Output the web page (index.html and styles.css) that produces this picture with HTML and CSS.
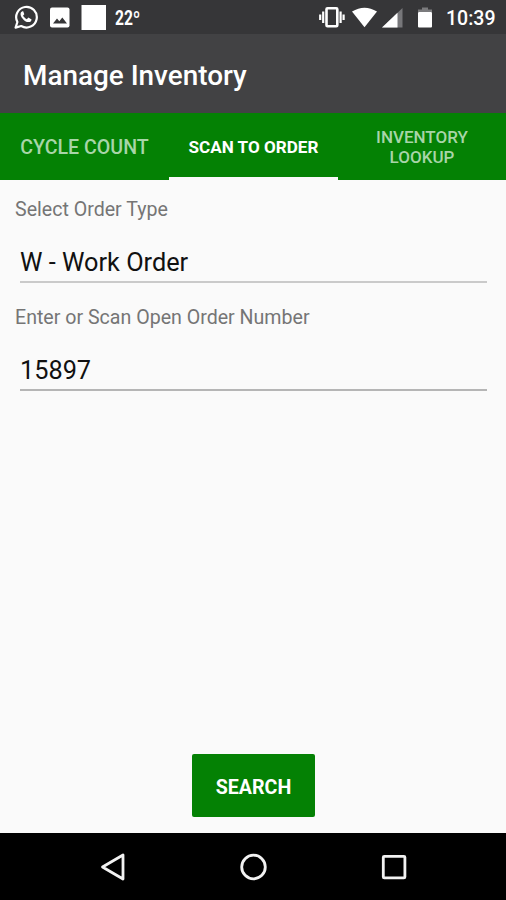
FILE: index.html
```html
<!DOCTYPE html>
<html lang="en">
<head>
    <meta charset="UTF-8">
    <meta name="viewport" content="width=device-width, initial-scale=1.0">
    <title>Manage Inventory</title>
    <link rel="stylesheet" href="styles.css">
</head>
<body>

<div class="screen">
    <div class="status-bar">
        <svg class="status-icons-left" width="92" height="34" viewBox="14 0 92 34">
            <path d="M15.6 27.6 L17.4 22 A10.3 10.3 0 1 1 21.2 26 Z" fill="none" stroke="#fff" stroke-width="2.2" stroke-linejoin="round"/>
            <path d="M22.4 11.2 C20 12 20 15.4 22.3 18.2 C25 21.8 28.6 23.2 31 21.2 L31.6 19.4 L28.4 17.6 L26.8 19.2 C25 18.4 23.8 17.2 23.1 15.6 L24.3 14.2 L23.2 11.2 Z" fill="#fff"/>
            <rect x="50" y="7.5" width="19.5" height="20" rx="2" fill="#fff"/>
            <path d="M53 23.5 L57 18.5 L59.3 21.3 L62.3 17.5 L67 23.5 Z" fill="#363638"/>
            <rect x="81.5" y="5" width="24.5" height="25" fill="#fff"/>
        </svg>
        <span class="temperature">22º</span>
        <svg class="status-icons-right" width="118" height="34" viewBox="317 0 118 34">
            <rect x="326.5" y="8.3" width="10.8" height="18" rx="1" fill="none" stroke="#fff" stroke-width="2.6"/>
            <path d="M323.2 11.5 V23 M340.6 11.5 V23 M320.2 14.5 V20 M343.6 14.5 V20" stroke="#fff" stroke-width="2.2"/>
            <path d="M352 11.6 Q364.5 3.8 377 11.6 L364.5 27.3 Z" fill="#fff"/>
            <path d="M402.5 8 V27.5 H382 Z" fill="#77777a"/>
            <path d="M397.5 12.7 V27.5 H382 Z" fill="#fff"/>
            <path d="M418 12 V9.5 H422 V7.5 H428 V9.5 H432 V12 Z" fill="#7b7b7d"/>
            <rect x="418" y="12" width="14" height="15.5" rx="1" fill="#fff"/>
        </svg>
        <span class="clock">10:39</span>
    </div>

    <div class="app-bar">
        <h1>Manage Inventory</h1>
    </div>

    <div class="tabs">
        <div class="tab tab-large">CYCLE COUNT</div>
        <div class="tab active">SCAN TO ORDER</div>
        <div class="tab">INVENTORY<br>LOOKUP</div>
    </div>

    <form class="order-form">
        <label for="order-type">Select Order Type</label>
        <input type="text" id="order-type" class="order-type" value="W - Work Order">
        <label for="order-number">Enter or Scan Open Order Number</label>
        <input type="text" id="order-number" value="15897">
        <button type="button" class="search-button">SEARCH</button>
    </form>

    <div class="nav-bar">
        <svg width="28" height="30" viewBox="0 0 28 30">
            <path d="M24 3 V27 L3.5 15 Z" fill="none" stroke="#f2f2f2" stroke-width="2.8" stroke-linejoin="round"/>
        </svg>
        <svg width="28" height="30" viewBox="0 0 28 30">
            <circle cx="13.5" cy="15" r="11.8" fill="none" stroke="#f2f2f2" stroke-width="2.8"/>
        </svg>
        <svg width="28" height="30" viewBox="0 0 28 30">
            <rect x="3.3" y="4.3" width="21.6" height="21.6" rx="1" fill="none" stroke="#f2f2f2" stroke-width="2.8"/>
        </svg>
    </div>
</div>

</body>
</html>
```

FILE: styles.css
```css
* {
    box-sizing: border-box;
}

body {
    margin: 0;
    font-family: Roboto, sans-serif;
    background-color: #fafafa;
}

.screen {
    display: flex;
    flex-direction: column;
    height: 900px;
    width: 506px;
    overflow: hidden;
}

.status-bar {
    display: flex;
    align-items: center;
    height: 34px;
    padding: 0 11px 0 14px;
    background-color: #363638;
    color: #fff;
}

.temperature {
    width: 24px;
    margin-left: 9px;
    margin-top: 2px;
    font-size: 20px;
    font-weight: 700;
    transform: scaleX(0.78);
    transform-origin: left;
}

.status-icons-right {
    margin-left: auto;
    margin-right: 11px;
}

.clock {
    width: 49px;
    margin-top: 3px;
    font-size: 19.5px;
    font-weight: 500;
    white-space: nowrap;
}

.app-bar {
    display: flex;
    align-items: center;
    height: 79px;
    padding: 4px 23px 0;
    background-color: #424244;
}

.app-bar h1 {
    margin: 0;
    font-size: 27.9px;
    font-weight: 500;
    color: #fff;
}

.tabs {
    display: grid;
    grid-template-columns: 169px 169px 168px;
    height: 67px;
    background-color: #048104;
}

.tab {
    display: flex;
    align-items: center;
    justify-content: center;
    border-bottom: 3px solid transparent;
    padding-top: 4px;
    font-size: 17px;
    font-weight: 500;
    line-height: 20px;
    text-align: center;
    color: #a8d5a8;
}

.tab-large {
    padding-top: 6px;
    font-size: 19.6px;
}

.tab.active {
    font-size: 17.1px;
    font-weight: 700;
    color: #fff;
    border-bottom-color: #fafafa;
}

.order-form {
    display: flex;
    flex-direction: column;
    flex: 1;
    padding: 18px 19px 16px 14px;
}

.order-form label {
    padding-left: 1px;
    font-size: 19.6px;
    line-height: 24px;
    color: #757575;
}

.order-form input {
    height: 56px;
    margin: 5px 0 23px 6px;
    padding: 17px 0 0;
    border: none;
    border-bottom: 2px solid #b5b5b5;
    background: none;
    font-family: inherit;
    font-size: 25.3px;
    color: #111;
    outline: none;
}

.order-form .order-type {
    border-bottom-color: #cacaca;
}

.search-button {
    width: 123px;
    height: 63px;
    margin: auto auto 0 178px;
    padding: 4px 0 0;
    border: none;
    border-radius: 2px;
    background-color: #048104;
    font-family: inherit;
    font-size: 19.6px;
    font-weight: 700;
    color: #fff;
}

.nav-bar {
    display: flex;
    justify-content: space-between;
    align-items: center;
    height: 67px;
    padding: 0 98px 0 99px;
    background-color: #000;
}
```
